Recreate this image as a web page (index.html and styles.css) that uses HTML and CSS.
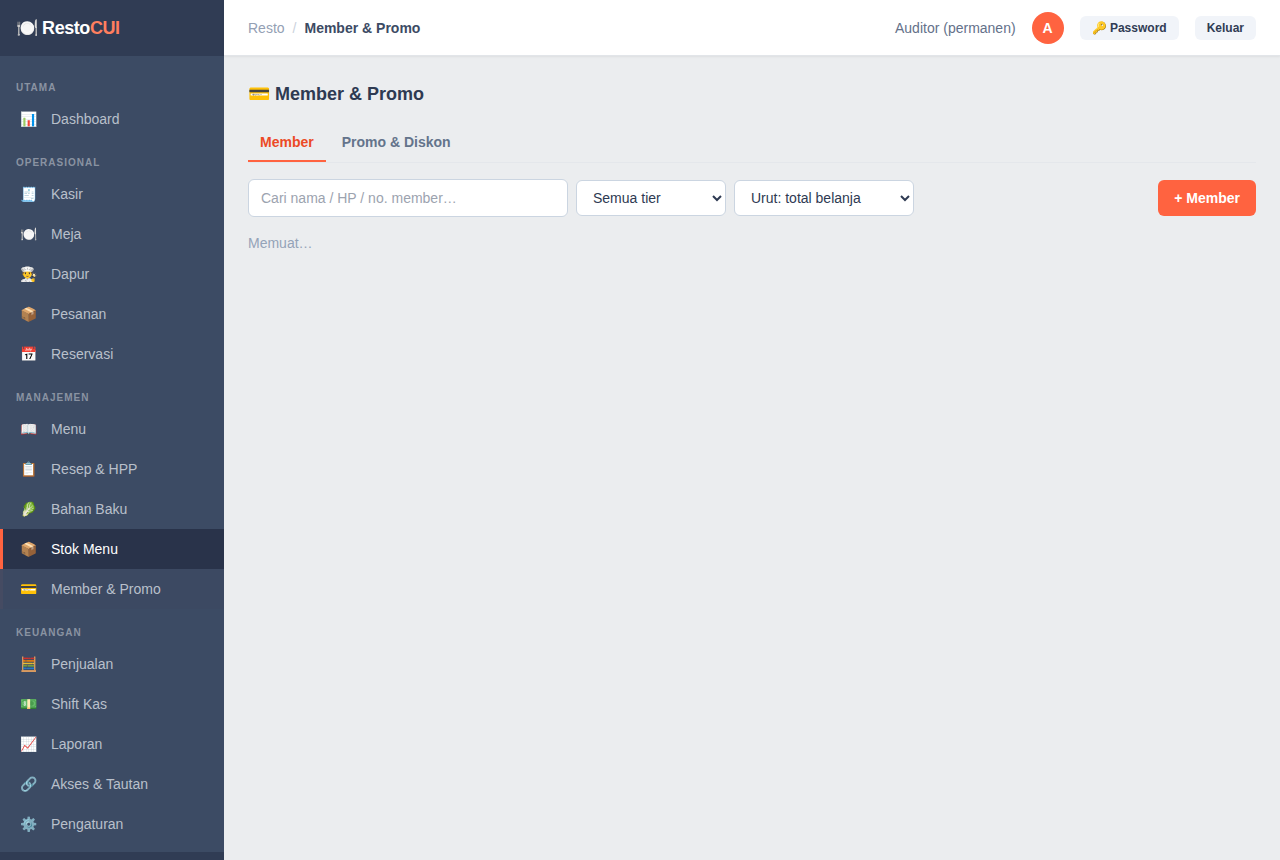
FILE: index.html
```html
<!DOCTYPE html>
<html lang="id">
<head>
    <meta charset="UTF-8">
    <meta name="viewport" content="width=device-width, initial-scale=1.0">
    <title>Member & Promo - RestoCUI</title>
    <link rel="stylesheet" href="styles.css">
</head>
<body>
    <aside class="sidebar">
        <div class="brand"><div>🍽️ Resto<span>CUI</span></div></div>
        <nav class="nav">
            <div class="nav-title">Utama</div>
            <a href="#" class="nav-link"><span class="icon">📊</span>Dashboard</a>

            <div class="nav-title">Operasional</div>
            <a href="#" class="nav-link"><span class="icon">🧾</span>Kasir</a>
            <a href="#" class="nav-link"><span class="icon">🍽️</span>Meja</a>
            <a href="#" class="nav-link"><span class="icon">👨‍🍳</span>Dapur</a>
            <a href="#" class="nav-link"><span class="icon">📦</span>Pesanan</a>
            <a href="#" class="nav-link"><span class="icon">📅</span>Reservasi</a>

            <div class="nav-title">Manajemen</div>
            <a href="#" class="nav-link"><span class="icon">📖</span>Menu</a>
            <a href="#" class="nav-link"><span class="icon">📋</span>Resep &amp; HPP</a>
            <a href="#" class="nav-link"><span class="icon">🥬</span>Bahan Baku</a>
            <a href="#" class="nav-link active"><span class="icon">📦</span>Stok Menu</a>
            <a href="#" class="nav-link current"><span class="icon">💳</span>Member &amp; Promo</a>

            <div class="nav-title">Keuangan</div>
            <a href="#" class="nav-link"><span class="icon">🧮</span>Penjualan</a>
            <a href="#" class="nav-link"><span class="icon">💵</span>Shift Kas</a>
            <a href="#" class="nav-link"><span class="icon">📈</span>Laporan</a>
            <a href="#" class="nav-link"><span class="icon">🔗</span>Akses &amp; Tautan</a>
            <a href="#" class="nav-link"><span class="icon">⚙️</span>Pengaturan</a>
        </nav>
        <div class="sidebar-footer"></div>
    </aside>

    <div class="main">
        <header class="topbar">
            <div class="breadcrumb">
                <span>Resto</span>
                <span class="sep">/</span>
                <strong>Member &amp; Promo</strong>
            </div>
            <div class="user">
                <span>Auditor (permanen)</span>
                <div class="avatar">A</div>
                <button type="button" class="btn-small">🔑 Password</button>
                <button type="button" class="btn-small">Keluar</button>
            </div>
        </header>

        <main class="content">
            <h1>💳 Member &amp; Promo</h1>
            <div class="tabs">
                <button type="button" class="tab active">Member</button>
                <button type="button" class="tab">Promo &amp; Diskon</button>
            </div>
            <div class="toolbar">
                <input type="text" class="search" placeholder="Cari nama / HP / no. member…" aria-label="Cari member">
                <select class="tier" aria-label="Tier">
                    <option>Semua tier</option>
                </select>
                <select class="sort" aria-label="Urutan">
                    <option>Urut: total belanja</option>
                </select>
                <button type="button" class="btn-primary">+ Member</button>
            </div>
            <div class="loading">Memuat…</div>
        </main>
    </div>
</body>
</html>
```

FILE: styles.css
```css
* {
    box-sizing: border-box;
}

body {
    display: flex;
    height: 100vh;
    margin: 0;
    overflow: hidden;
    background-color: #ebedef;
    color: #2e3a52;
    font-family: "Liberation Sans", Arial, sans-serif;
    font-size: 14px;
    line-height: 20px;
}

button, input, select {
    font: inherit;
    color: inherit;
}

button {
    border: none;
    cursor: pointer;
}

.sidebar {
    display: flex;
    flex-direction: column;
    flex: 0 0 224px;
    background-color: #3c4b64;
}

.brand {
    display: flex;
    align-items: center;
    flex: 0 0 56px;
    padding: 0 16px;
    background-color: #303c54;
    color: #fff;
    font-size: 18px;
    font-weight: 700;
    letter-spacing: -0.025em;
}

.brand span {
    color: #ff7f5f;
}

.nav {
    flex: 1;
    min-height: 0;
    padding: 8px 0;
    overflow: hidden;
}

.nav-title {
    padding: 16px 16px 4px;
    color: #8a93a2;
    font-size: 10px;
    font-weight: 700;
    line-height: 15px;
    letter-spacing: 1px;
    text-transform: uppercase;
}

.nav-link {
    display: flex;
    align-items: center;
    gap: 14px;
    height: 40px;
    padding: 0 16px;
    border-left: 3px solid transparent;
    color: #b9c0cb;
    text-decoration: none;
}

.icon {
    width: 18px;
    text-align: center;
}

.nav-link.active {
    border-left-color: #ff6340;
    background-color: #29334a;
    color: #fff;
}

.nav-link.current {
    border-left-color: #454b62;
    background-color: #3c4962;
}

.sidebar-footer {
    flex: 0 0 8px;
    background-color: #303c54;
}

.main {
    display: flex;
    flex-direction: column;
    flex: 1;
    min-width: 0;
}

.topbar {
    display: flex;
    align-items: center;
    justify-content: space-between;
    flex: 0 0 56px;
    padding: 0 24px;
    border-bottom: 1px solid #e2e5e9;
    background-color: #fff;
    box-shadow: 0 1px 2px rgba(0, 0, 0, 0.06);
}

.breadcrumb {
    display: flex;
    gap: 8px;
    color: #94a0b4;
}

.breadcrumb .sep {
    color: #cbd2dc;
}

.breadcrumb strong {
    color: #3c4b64;
}

.user {
    display: flex;
    align-items: center;
    gap: 16px;
    color: #64718a;
}

.avatar {
    display: flex;
    align-items: center;
    justify-content: center;
    width: 32px;
    height: 32px;
    border-radius: 50%;
    background-color: #ff6340;
    color: #fff;
    font-weight: 700;
}

.btn-small {
    padding: 4px 12px;
    border-radius: 6px;
    background-color: #f1f4f9;
    color: #303c54;
    font-size: 12px;
    font-weight: 700;
    line-height: 16px;
}

.content {
    padding: 24px;
}

h1 {
    margin: 0 0 16px;
    font-size: 18px;
    line-height: 28px;
}

.tabs {
    display: flex;
    gap: 4px;
    margin-bottom: 16px;
    border-bottom: 1px solid #e4e7eb;
}

.tab {
    padding: 8px 12px;
    border-bottom: 2px solid transparent;
    background: none;
    color: #64748b;
    font-weight: 700;
}

.tab.active {
    border-bottom-color: #ff6340;
    color: #ec4a25;
}

.toolbar {
    display: flex;
    align-items: center;
    gap: 8px;
    margin-bottom: 16px;
}

.search,
.tier,
.sort {
    padding: 8px 12px;
    border: 1px solid #cbd5e1;
    border-radius: 6px;
    background-color: #fff;
}

.search {
    width: 320px;
}

.search::placeholder {
    color: #9ca3af;
}

.tier {
    width: 150px;
}

.sort {
    width: 180px;
}

.btn-primary {
    margin-left: auto;
    padding: 8px 16px;
    border-radius: 6px;
    background-color: #ff6340;
    color: #fff;
    font-weight: 700;
}

.loading {
    color: #94a3b8;
}
```
